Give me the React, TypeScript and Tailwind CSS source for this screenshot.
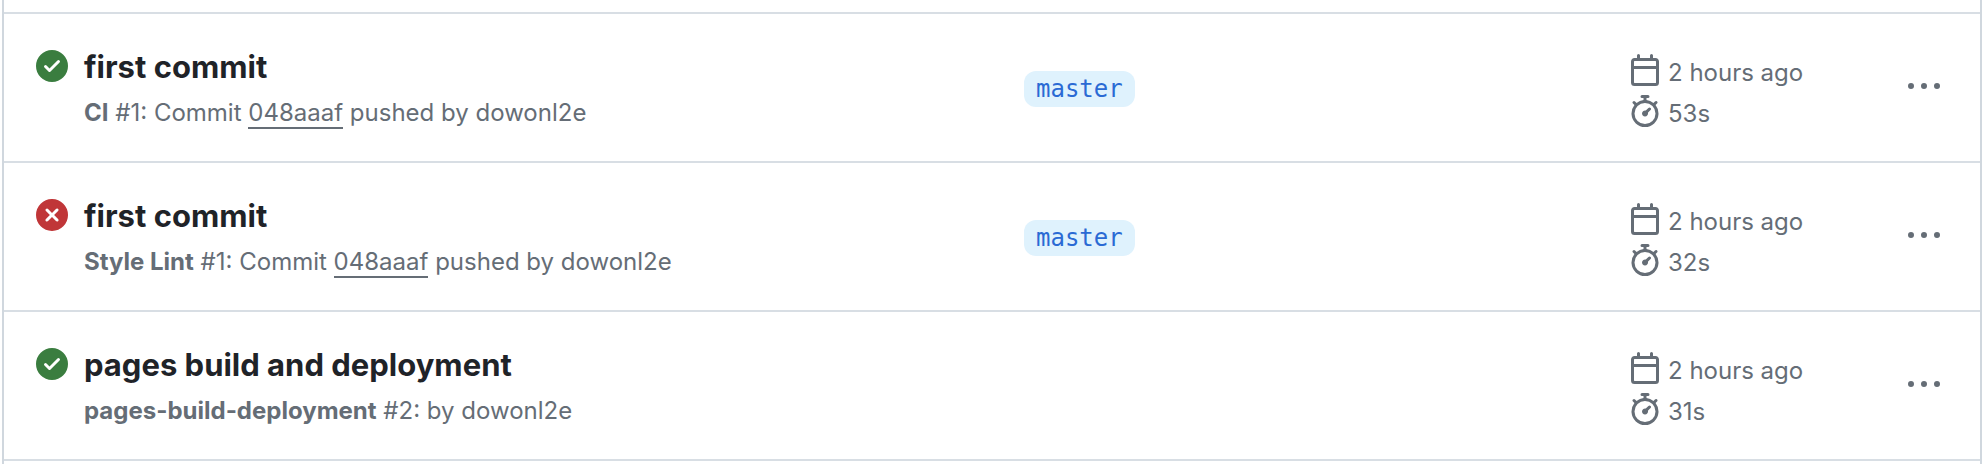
type Run = {
  ok: boolean;
  title: string;
  workflow: string;
  num: number;
  sha?: string;
  branch?: string;
  duration: string;
};

const runs: Run[] = [
  { ok: true, title: "first commit", workflow: "CI", num: 1, sha: "048aaaf", branch: "master", duration: "53s" },
  { ok: false, title: "first commit", workflow: "Style Lint", num: 1, sha: "048aaaf", branch: "master", duration: "32s" },
  { ok: true, title: "pages build and deployment", workflow: "pages-build-deployment", num: 2, duration: "31s" },
];

const icons = {
  success:
    "M8 16A8 8 0 1 1 8 0a8 8 0 0 1 0 16Zm3.78-9.72a.751.751 0 0 0-.018-1.042.751.751 0 0 0-1.042-.018L6.75 9.19 5.28 7.72a.751.751 0 0 0-1.042.018.751.751 0 0 0-.018 1.042l2 2a.75.75 0 0 0 1.06 0Z",
  failure:
    "M2.343 13.657A8 8 0 1 1 13.658 2.343 8 8 0 0 1 2.343 13.657ZM6.03 4.97a.751.751 0 0 0-1.042.018.751.751 0 0 0-.018 1.042L6.94 8 4.97 9.97a.749.749 0 0 0 .326 1.275.749.749 0 0 0 .734-.215L8 9.06l1.97 1.97a.749.749 0 0 0 1.275-.326.749.749 0 0 0-.215-.734L9.06 8l1.97-1.97a.749.749 0 0 0-.326-1.275.749.749 0 0 0-.734.215L8 6.94Z",
  calendar:
    "M4.75 0a.75.75 0 0 1 .75.75V2h5V.75a.75.75 0 0 1 1.5 0V2h1.25c.966 0 1.75.784 1.75 1.75v10.5A1.75 1.75 0 0 1 13.25 16H2.75A1.75 1.75 0 0 1 1 14.25V3.75C1 2.784 1.784 2 2.75 2H4V.75A.75.75 0 0 1 4.75 0ZM2.5 7.5v6.75c0 .138.112.25.25.25h10.5a.25.25 0 0 0 .25-.25V7.5Zm10.75-4H2.75a.25.25 0 0 0-.25.25V6h11V3.75a.25.25 0 0 0-.25-.25Z",
  stopwatch:
    "M5.75.75A.75.75 0 0 1 6.5 0h3a.75.75 0 0 1 0 1.5h-.75v1l-.001.041a6.724 6.724 0 0 1 3.464 1.435l.007-.006.75-.75a.749.749 0 0 1 1.275.326.749.749 0 0 1-.215.734l-.75.75-.006.007a6.75 6.75 0 1 1-10.548 0L2.72 5.03l-.75-.75a.751.751 0 0 1 .018-1.042.751.751 0 0 1 1.042-.018l.75.75.007.006A6.72 6.72 0 0 1 7.25 2.541V1.5H6.5a.75.75 0 0 1-.75-.75ZM8 14.5a5.25 5.25 0 1 0-.001-10.501A5.25 5.25 0 0 0 8 14.5Zm.389-6.7 1.33-1.33a.75.75 0 1 1 1.061 1.06L9.45 8.861A1.503 1.503 0 0 1 8 10.75a1.499 1.499 0 1 1 .389-2.95Z",
  kebab:
    "M8 9a1.5 1.5 0 1 0 0-3 1.5 1.5 0 0 0 0 3ZM1.5 9a1.5 1.5 0 1 0 0-3 1.5 1.5 0 0 0 0 3Zm13 0a1.5 1.5 0 1 0 0-3 1.5 1.5 0 0 0 0 3Z",
};

function Icon({ name, className = "" }: { name: keyof typeof icons; className?: string }) {
  return (
    <svg viewBox="0 0 16 16" fill="currentColor" aria-hidden="true" className={`size-8 shrink-0 ${className}`}>
      <path d={icons[name]} />
    </svg>
  );
}

function RunRow({ run }: { run: Run }) {
  return (
    <li className="grid grid-cols-[988fr_605fr_279fr_32px] items-start border-b-2 border-[#d8dee4] pt-9 pr-10 pb-7 pl-8">
      <div className="flex gap-4">
        <Icon name={run.ok ? "success" : "failure"} className={run.ok ? "text-[#3a7d3f]" : "text-[#c03638]"} />
        <div>
          <h3 className="text-[31px] leading-[34px] font-bold text-[#1f2328]">
            <a href="#run">{run.title}</a>
          </h3>
          <p className="mt-[11px] text-2xl leading-9">
            <b className="font-bold">{run.workflow}</b> #{run.num}:{" "}
            {run.sha && (
              <>
                Commit{" "}
                <a href="#commit" className="border-b-2 border-[#656d76]">
                  {run.sha}
                </a>{" "}
                pushed{" "}
              </>
            )}
            by dowonl2e
          </p>
        </div>
      </div>
      <div className="flex pt-[21px]">
        {run.branch && (
          <a
            href="#branch"
            className="rounded-xl bg-[#dff2fd] px-3 font-['DejaVu_Sans_Mono',monospace] text-2xl leading-9 text-[#2a6ad4]"
          >
            {run.branch}
          </a>
        )}
      </div>
      <div className="flex flex-col gap-[3px] pt-1 text-2xl leading-[38px]">
        <div className="flex gap-[7px]">
          <Icon name="calendar" />
          <time>2 hours ago</time>
        </div>
        <div className="flex gap-[7px]">
          <Icon name="stopwatch" />
          <span>{run.duration}</span>
        </div>
      </div>
      <button type="button" aria-label="Show options" className="mt-[21px]">
        <Icon name="kebab" />
      </button>
    </li>
  );
}

export default function App() {
  return (
    <main className="min-h-screen bg-white pr-[6px] pl-[2px] font-[Inter,sans-serif] text-[#656d76]">
      <section className="min-h-screen border-x-2 border-[#d0d7de] pt-3">
        <ul className="border-t-2 border-[#d8dee4]">
          {runs.map((run) => (
            <RunRow key={run.workflow} run={run} />
          ))}
        </ul>
      </section>
    </main>
  );
}
